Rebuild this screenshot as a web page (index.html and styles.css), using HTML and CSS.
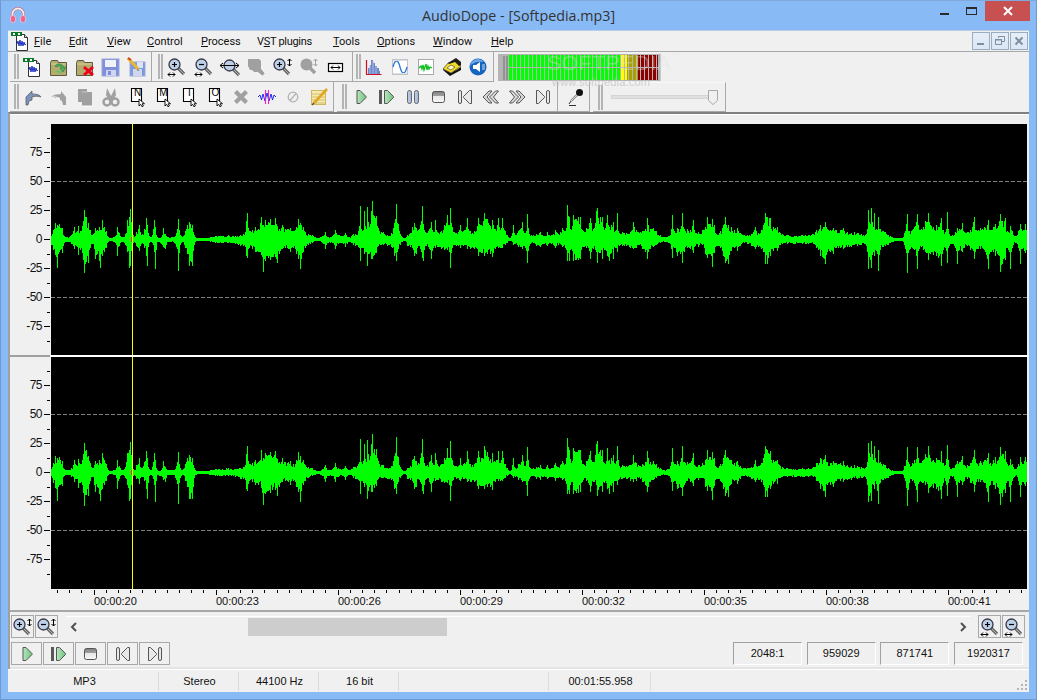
FILE: index.html
```html
<!DOCTYPE html>
<html lang="en">
<head>
<meta charset="utf-8">
<title>AudioDope - [Softpedia.mp3]</title>
<link rel="stylesheet" href="styles.css">
</head>
<body>
<svg class="defs" width="0" height="0" aria-hidden="true">
  <defs>
    <symbol id="i-new" viewBox="0 0 20 20">
      <path d="M5.5 3.500h8l3 3v13h-11z" fill="#fff" stroke="#333"/>
      <path d="M13.500 3.500v3h3" fill="#ddd" stroke="#333"/>
      <rect x="0" y="1" width="11" height="4" fill="#0a7a2a"/>
      <rect x="2" y="2" width="2" height="2" fill="#fff"/><rect x="7" y="2" width="2" height="2" fill="#fff"/>
      <path d="M6 13l1-3 1 5 1-6 1 6 1-5 1 5 1-4 1 3 1-1" fill="none" stroke="#2030c0" stroke-width="1"/>
    </symbol>
    <symbol id="i-open" viewBox="0 0 20 20">
      <path d="M1.500 5.500l1-2h6l1 2h8v13h-16z" fill="#b4ac6c" stroke="#5c5a40"/>
      <path d="M2 7h15" stroke="#d8d098"/>
      <path d="M6 9a5 5 0 0 1 9 2l2-1-3 5-3-4 2 0a3 3 0 0 0-5-1z" fill="#4fb060" stroke="#2c7a3c" stroke-width=".6"/>
      <path d="M13 15a4 4 0 0 1-6-1l2-1a3 3 0 0 0 4 1z" fill="#5fc070"/>
    </symbol>
    <symbol id="i-close" viewBox="0 0 20 20">
      <path d="M1.500 5.500l1-2h6l1 2h8v13h-16z" fill="#b4ac6c" stroke="#5c5a40"/>
      <path d="M2 7h15" stroke="#d8d098"/>
      <path d="M9 10l9 8M18 10l-9 8" stroke="#f0001c" stroke-width="3"/>
    </symbol>
    <symbol id="i-save" viewBox="0 0 20 20">
      <rect x="1" y="2" width="17" height="17" fill="#7f8fdc" stroke="#9aa6d8"/>
      <rect x="4" y="3" width="11" height="7" fill="#f0f2fa"/>
      <rect x="5" y="13" width="10" height="6" fill="#d0d6ee"/>
      <rect x="7" y="14" width="3" height="4" fill="#7f8fdc"/>
    </symbol>
    <symbol id="i-saveas" viewBox="0 0 20 20">
      <rect x="3" y="5" width="15" height="14" fill="#7f98dc" stroke="#9aa6d8"/>
      <rect x="6" y="12" width="9" height="7" fill="#d0d6ee"/>
      <rect x="10" y="5" width="6" height="6" fill="#dde4f6"/>
      <path d="M1 1l10 11" stroke="#e8b830" stroke-width="3"/>
      <path d="M1 1l3 2" stroke="#d04030" stroke-width="2"/>
      <path d="M11 12l1 2-2-1z" fill="#333"/>
    </symbol>
    <symbol id="i-lens" viewBox="0 0 20 20">
      <path d="M11 11l6 6" stroke="#666" stroke-width="3.200"/>
      <path d="M11 11l6 6" stroke="#b4b4b4" stroke-width="1"/>
      <circle cx="7.500" cy="7.500" r="5.500" fill="#bcd0e8" stroke="#383848" stroke-width="1.300"/>
    </symbol>
    <symbol id="i-zin-h" viewBox="0 0 20 20">
      <use href="#i-lens"/><path d="M5 7.500h5M7.500 5v5" stroke="#000" stroke-width="1.200"/>
      <path d="M1 17.500h7M1 17.500l2-2M1 17.500l2 2M8 17.500l-2-2M8 17.500l-2 2" stroke="#000" fill="none"/>
    </symbol>
    <symbol id="i-zout-h" viewBox="0 0 20 20">
      <use href="#i-lens"/><path d="M5 7.500h5" stroke="#000" stroke-width="1.200"/>
      <path d="M1 17.500h7M1 17.500l2-2M1 17.500l2 2M8 17.500l-2-2M8 17.500l-2 2" stroke="#000" fill="none"/>
    </symbol>
    <symbol id="i-zfit" viewBox="0 0 20 20">
      <g transform="translate(2 1)"><use href="#i-lens" width="20" height="20"/></g>
      <path d="M0 8.500h19M0 8.500l3-2.500M0 8.500l3 2.500M19 8.500l-3-2.500M19 8.500l-3 2.500" stroke="#000" fill="none"/>
    </symbol>
    <symbol id="i-dis1" viewBox="0 0 20 20">
      <path d="M2 2h11l2 2v7l4 5-3 3-5-4H8l-2-2H4L2 9z" fill="#a0a0a0"/>
      <path d="M15 11l4 5M11 15l5 4" stroke="#fff"/>
    </symbol>
    <symbol id="i-zin-v" viewBox="0 0 20 20">
      <g transform="translate(-1 0)"><use href="#i-lens" width="20" height="20"/></g>
      <path d="M4 7.500h5M6.500 5v5" stroke="#000" stroke-width="1.200"/>
      <path d="M16.500 2v7M16.500 2l-2 2M16.500 2l2 2M16.500 9l-2-2M16.500 9l2-2" stroke="#000" fill="none"/>
    </symbol>
    <symbol id="i-zout-v" viewBox="0 0 20 20">
      <g transform="translate(-1 0)"><use href="#i-lens" width="20" height="20"/></g>
      <path d="M4 7.500h5" stroke="#000" stroke-width="1.200"/>
      <path d="M16.500 2v7M16.500 2l-2 2M16.500 2l2 2M16.500 9l-2-2M16.500 9l2-2" stroke="#000" fill="none"/>
    </symbol>
    <symbol id="i-dis2" viewBox="0 0 20 20">
      <circle cx="7.500" cy="7.500" r="6" fill="#a0a0a0"/>
      <path d="M11 11l5 5" stroke="#a0a0a0" stroke-width="3.500"/>
      <path d="M16.500 2v7M16.500 2l-2 2M16.500 2l2 2M16.500 9l-2-2M16.500 9l2-2" stroke="#a0a0a0" fill="none"/>
    </symbol>
    <symbol id="i-fitw" viewBox="0 0 20 20">
      <rect x="2.500" y="6.500" width="14" height="8" fill="#fff" stroke="#000" stroke-width="1.200"/>
      <path d="M5 10.500h9M5 10.500l2-2M5 10.500l2 2M14 10.500l-2-2M14 10.500l-2 2" stroke="#000" fill="none"/>
    </symbol>
    <symbol id="i-spec" viewBox="0 0 20 20">
      <path d="M4 17v-6h2V8h1V3h2v3h2v3h2v2h2v3h1v3z" fill="#6c88c8"/>
      <path d="M6 17V8M9 17V4M12 17V9" stroke="#b0c0e8"/>
      <path d="M2.500 3v14.500h15" fill="none" stroke="#d01020" stroke-width="1.200"/>
    </symbol>
    <symbol id="i-sine" viewBox="0 0 20 20">
      <rect x="2.500" y="2.500" width="15" height="15" fill="#fff" stroke="#c4c4c4"/>
      <path d="M3 10c2-8 5-8 7 0s5 8 7 0" fill="none" stroke="#2878d8" stroke-width="1.300"/>
      <path d="M3 3.500h14M3 16.500h14" stroke="#d8e0f0"/>
    </symbol>
    <symbol id="i-gwave" viewBox="0 0 20 20">
      <rect x="2.500" y="2.500" width="15" height="15" fill="#fff" stroke="#a8a8a8"/>
      <path d="M3 11l2-2 1 3 1-4 1 5 2-6 1 6 1-4 1 3 1-2 2 1" fill="none" stroke="#10c020" stroke-width="1.300"/>
    </symbol>
    <symbol id="i-phone" viewBox="0 0 20 20">
      <path d="M1 13l7 6 11-6v-3L9 16 2 11z" fill="#111"/>
      <path d="M1 12l5-6 8-2 5 5-10 7z" fill="#f4dc20" stroke="#444" stroke-width=".7"/>
      <path d="M6 6l8-5 5 4v3l-2 1-4-4-6 2z" fill="#1a1a1a"/>
      <path d="M5 11l4-3 4 2-4 3z" fill="#fff8c0" stroke="#555" stroke-width=".7"/>
      <path d="M14 13l3-2" stroke="#a89000"/>
    </symbol>
    <symbol id="i-globe" viewBox="0 0 20 20">
      <circle cx="10" cy="10" r="8.500" fill="#1464c0"/>
      <path d="M10 2a8 8 0 0 0-8 7c3-4 9-5 14-4a8 8 0 0 0-6-3z" fill="#6aa8e4"/>
      <path d="M5 8h3l4-3v10l-4-3H5z" fill="#fff"/>
      <path d="M14 8h3M14 10h3M14 12h3" stroke="#cfe2f7"/>
    </symbol>
    <symbol id="i-undo" viewBox="0 0 20 20">
      <path d="M3 10l6-6v3c5 0 8 1 9 3-3-1-6-1-9 0v3l-3 1-1 4H3z" fill="#7c94bc" stroke="#555" stroke-width=".7"/>
    </symbol>
    <symbol id="i-redo" viewBox="0 0 20 20">
      <path d="M17 10l-5-6v3c-5 0-8 1-10 3 3-1 6 0 9 1v2l2 1 1 4h3z" fill="#a0a0a0"/>
      <path d="M3 11c2-1 5-1 7 0" stroke="#fff"/>
    </symbol>
    <symbol id="i-copy" viewBox="0 0 20 20">
      <path d="M3 2h9v3h5v14H7v-4H3z" fill="#a0a0a0"/>
      <path d="M7 5h5" stroke="#c4c4c4"/>
      <path d="M17 19H7" stroke="#fff"/>
    </symbol>
    <symbol id="i-cut" viewBox="0 0 20 20">
      <path d="M6 1l4 8 4-8 1 7-3 5-4 0-3-5z" fill="#a0a0a0"/>
      <circle cx="6" cy="15" r="3.500" fill="none" stroke="#a0a0a0" stroke-width="2.500"/>
      <circle cx="14" cy="15" r="3.500" fill="none" stroke="#a0a0a0" stroke-width="2.500"/>
    </symbol>
    <symbol id="i-mark" viewBox="0 0 20 20">
      <path d="M4.500 1.500h10v13h-10z" fill="#fff" stroke="#000" stroke-width="1.100"/>
      <path d="M12 12v7l1.700-1.700 1.200 2.400 1.500-.7-1.200-2.300h2.300z" fill="#fff" stroke="#000" stroke-width=".9"/>
    </symbol>
    <symbol id="i-x" viewBox="0 0 20 20">
      <path d="M3 6l3-3 4 4 4-4 3 3-4 4 4 4-3 3-4-4-4 4-3-3 4-4z" fill="#a0a0a0"/>
    </symbol>
    <symbol id="i-wave" viewBox="0 0 20 20">
      <path d="M1 10l2-2 1.500 5L6 7l2 7 2-8 2 8 2-7 1.500 6L17 8l2 2" fill="none" stroke="#0018e8" stroke-width=".9"/>
      <path d="M8.500 3v14M11.500 3v14" stroke="#f020c0" stroke-width="1.100"/>
    </symbol>
    <symbol id="i-forbid" viewBox="0 0 20 20">
      <circle cx="10" cy="10" r="4.800" fill="none" stroke="#b0b0b0" stroke-width="1.200"/>
      <path d="M7 13.500l6-7" stroke="#b0b0b0" stroke-width="1.200"/>
    </symbol>
    <symbol id="i-note" viewBox="0 0 20 20">
      <rect x="2.500" y="3.500" width="14" height="14" fill="#f6ecb0" stroke="#d0b860"/>
      <path d="M3 7h13M3 10h13M3 13h13M3 16h13" stroke="#d4bc70"/>
      <path d="M5 16L18 2" stroke="#e0a820" stroke-width="2.600"/>
      <path d="M5 16l-2 2" stroke="#555" stroke-width="1.500"/>
    </symbol>
    <linearGradient id="g-green" x1="0" x2="1" y1="0" y2="0"><stop offset="0" stop-color="#b8e4c0"/><stop offset="1" stop-color="#70c47c"/></linearGradient>
    <linearGradient id="g-blue" x1="0" x2="1" y1="0" y2="0"><stop offset="0" stop-color="#c0d0ec"/><stop offset="1" stop-color="#a0b4d8"/></linearGradient>
    <linearGradient id="g-stop" x1="0" x2="0" y1="0" y2="1"><stop offset="0" stop-color="#808080"/><stop offset=".4" stop-color="#a0a0a0"/><stop offset=".45" stop-color="#e8e8e8"/><stop offset="1" stop-color="#f8f8f8"/></linearGradient>
    <symbol id="i-play" viewBox="0 0 20 20">
      <path d="M6 3.500h3l6 6v1l-6 6H6z" fill="url(#g-green)" stroke="#555" stroke-linejoin="round"/>
    </symbol>
    <symbol id="i-playfrom" viewBox="0 0 20 20">
      <rect x="2" y="3" width="3" height="14" fill="#585858"/>
      <path d="M7.500 3.500h3l6 6v1l-6 6h-3z" fill="url(#g-green)" stroke="#555" stroke-linejoin="round"/>
    </symbol>
    <symbol id="i-pause" viewBox="0 0 20 20">
      <rect x="4.500" y="3.500" width="4" height="13" rx="2" fill="url(#g-blue)" stroke="#666"/>
      <rect x="11.500" y="3.500" width="4" height="13" rx="2" fill="url(#g-blue)" stroke="#666"/>
    </symbol>
    <symbol id="i-stop" viewBox="0 0 20 20">
      <rect x="3.500" y="4.500" width="12" height="11" rx="2" fill="url(#g-stop)" stroke="#555"/>
    </symbol>
    <symbol id="i-prev" viewBox="0 0 20 20">
      <rect x="3.500" y="3.500" width="3" height="13" rx="1.500" fill="#e8e8e8" stroke="#555"/>
      <path d="M16.500 3.500h-2l-6 6v1l6 6h2z" fill="#e8e8e8" stroke="#555" stroke-linejoin="round"/>
    </symbol>
    <symbol id="i-rew" viewBox="0 0 20 20">
      <path d="M11 4H8l-6 6 6 6h3l-5-6z" fill="#d8d8d8" stroke="#555" stroke-linejoin="round"/>
      <path d="M17.500 4h-3l-6 6 6 6h3l-5-6z" fill="#d8d8d8" stroke="#555" stroke-linejoin="round"/>
    </symbol>
    <symbol id="i-fwd" viewBox="0 0 20 20">
      <path d="M9 4h3l6 6-6 6H9l5-6z" fill="#d8d8d8" stroke="#555" stroke-linejoin="round"/>
      <path d="M2.500 4h3l6 6-6 6h-3l5-6z" fill="#d8d8d8" stroke="#555" stroke-linejoin="round"/>
    </symbol>
    <symbol id="i-next" viewBox="0 0 20 20">
      <path d="M3.500 3.500h2l6 6v1l-6 6h-2z" fill="#e8e8e8" stroke="#555" stroke-linejoin="round"/>
      <rect x="13.500" y="3.500" width="3" height="13" rx="1.500" fill="#e8e8e8" stroke="#555"/>
    </symbol>
    <symbol id="i-mic" viewBox="0 0 20 20">
      <path d="M11 8l-6 6" stroke="#8c8c8c" stroke-width="2.400"/>
      <path d="M11 8l-6 6" stroke="#e4e4e4" stroke-width=".8"/>
      <circle cx="13.500" cy="5.500" r="3.500" fill="#111"/>
      <path d="M3 18.500h7M3 17l2-3" stroke="#333"/>
    </symbol>
  </defs>
</svg>

<div class="window">
  <header class="titlebar">
    <div class="title-left">
      <svg class="appicon" viewBox="0 0 16 16" width="16" height="16">
        <path d="M2.500 10V7a5.500 5.500 0 0 1 11 0v3" fill="none" stroke="#c85a6c" stroke-width="3"/>
        <path d="M2.500 10V7a5.500 5.500 0 0 1 11 0v3" fill="none" stroke="#eef0f2" stroke-width="1.800"/>
        <rect x=".5" y="8.500" width="5" height="7" rx="2.400" fill="#f2628a" stroke="#f7d8e0" stroke-width=".6"/>
        <rect x="10.500" y="8.500" width="5" height="7" rx="2.400" fill="#f2628a" stroke="#f7d8e0" stroke-width=".6"/>
      </svg>
    </div>
    <div class="title-text">AudioDope - [Softpedia.mp3]</div>
    <div class="win-controls">
      <div class="win-btn"><span class="glyph-min"></span></div>
      <div class="win-btn"><span class="glyph-max"></span></div>
      <div class="win-btn win-close">
        <svg viewBox="0 0 10 10" width="10" height="10"><path d="M1 1l8 8M9 1l-8 8" stroke="#fff" stroke-width="2"/></svg>
      </div>
    </div>
  </header>

  <div class="client">
    <nav class="menubar">
      <svg class="menu-icon"><use href="#i-new"/></svg>
      <div class="menu-items">
        <span class="mi mi-file"><u>F</u>ile</span>
        <span class="mi mi-edit"><u>E</u>dit</span>
        <span class="mi mi-view"><u>V</u>iew</span>
        <span class="mi mi-control"><u>C</u>ontrol</span>
        <span class="mi mi-process"><u>P</u>rocess</span>
        <span class="mi mi-vst">V<u>S</u>T plugins</span>
        <span class="mi mi-tools"><u>T</u>ools</span>
        <span class="mi mi-options"><u>O</u>ptions</span>
        <span class="mi mi-window"><u>W</u>indow</span>
        <span class="mi mi-help"><u>H</u>elp</span>
      </div>
      <div class="mdi-btns">
        <div class="mdi-btn"><svg viewBox="0 0 12 12" width="12" height="12"><rect x="2" y="8" width="7" height="2" fill="#7d8fa3"/></svg></div>
        <div class="mdi-btn"><svg viewBox="0 0 12 12" width="12" height="12"><path d="M4.500 3V1.500h6v5H8M1.500 4.500h6v5h-6z" fill="none" stroke="#7d8fa3"/><path d="M1 4h7v1.500H1z" fill="#7d8fa3"/></svg></div>
        <div class="mdi-btn"><svg viewBox="0 0 12 12" width="12" height="12"><path d="M2.500 2.500l7 7M9.500 2.500l-7 7" stroke="#7d8fa3" stroke-width="2"/></svg></div>
      </div>
    </nav>

    <div class="toolrow">
      <div class="tgroup tg-file">
        <span class="grip"></span>
        <span class="tb"><svg><use href="#i-new"/></svg></span>
        <span class="tb"><svg><use href="#i-open"/></svg></span>
        <span class="tb"><svg><use href="#i-close"/></svg></span>
        <span class="tb"><svg><use href="#i-save"/></svg></span>
        <span class="tb"><svg><use href="#i-saveas"/></svg></span>
      </div>
      <div class="tgroup tg-zoom">
        <span class="grip"></span>
        <span class="tb"><svg><use href="#i-zin-h"/></svg></span>
        <span class="tb"><svg><use href="#i-zout-h"/></svg></span>
        <span class="tb"><svg><use href="#i-zfit"/></svg></span>
        <span class="tb"><svg><use href="#i-dis1"/></svg></span>
        <span class="tb"><svg><use href="#i-zin-v"/></svg></span>
        <span class="tb"><svg><use href="#i-dis2"/></svg></span>
        <span class="tb"><svg><use href="#i-fitw"/></svg></span>
      </div>
      <div class="tgroup tg-view">
        <span class="grip"></span>
        <span class="tb"><svg><use href="#i-spec"/></svg></span>
        <span class="tb"><svg><use href="#i-sine"/></svg></span>
        <span class="tb"><svg><use href="#i-gwave"/></svg></span>
        <span class="tb"><svg><use href="#i-phone"/></svg></span>
        <span class="tb"><svg><use href="#i-globe"/></svg></span>
      </div>
      <div class="tgroup tg-meter">
        <span class="grip"></span>
        <div class="meter">
          <div class="meter-row"></div>
          <div class="meter-row"></div>
        </div>
        <div class="watermark">SOFTPEDIA<sup>™</sup></div>
      </div>
    </div>

    <div class="toolrow toolrow-2">
      <div class="tgroup tg-edit">
        <span class="grip"></span>
        <span class="tb"><svg><use href="#i-undo"/></svg></span>
        <span class="tb"><svg><use href="#i-redo"/></svg></span>
        <span class="tb"><svg><use href="#i-copy"/></svg></span>
        <span class="tb"><svg><use href="#i-cut"/></svg></span>
        <span class="tb tb-mark"><svg><use href="#i-mark"/></svg><b>N</b></span>
        <span class="tb tb-mark"><svg><use href="#i-mark"/></svg><b>M</b></span>
        <span class="tb tb-mark"><svg><use href="#i-mark"/></svg><b>I</b></span>
        <span class="tb tb-mark"><svg><use href="#i-mark"/></svg><b>O</b></span>
        <span class="tb"><svg><use href="#i-x"/></svg></span>
        <span class="tb"><svg><use href="#i-wave"/></svg></span>
        <span class="tb"><svg><use href="#i-forbid"/></svg></span>
        <span class="tb"><svg><use href="#i-note"/></svg></span>
      </div>
      <div class="tgroup tg-transport">
        <span class="grip"></span>
        <span class="tb"><svg><use href="#i-play"/></svg></span>
        <span class="tb"><svg><use href="#i-playfrom"/></svg></span>
        <span class="tb"><svg><use href="#i-pause"/></svg></span>
        <span class="tb"><svg><use href="#i-stop"/></svg></span>
        <span class="tb"><svg><use href="#i-prev"/></svg></span>
        <span class="tb"><svg><use href="#i-rew"/></svg></span>
        <span class="tb"><svg><use href="#i-fwd"/></svg></span>
        <span class="tb"><svg><use href="#i-next"/></svg></span>
        <span class="tsep"></span>
        <span class="tb tb-mic"><svg><use href="#i-mic"/></svg></span>
      </div>
      <div class="tgroup tg-slider">
        <span class="grip"></span>
        <div class="slider">
          <div class="slider-track"></div>
          <svg class="slider-thumb" viewBox="0 0 10 15" width="10" height="15"><path d="M.5.500h9v10l-4.500 4-4.500-4z" fill="#f0f0f0" stroke="#a8a8a8"/></svg>
        </div>
        <div class="watermark-url">www.softpedia.com</div>
      </div>
    </div>

    <div class="doc">
      <div class="doc-top"></div>
      <section class="channel">
        <div class="yaxis">
          <div class="ytick">75</div><div class="ytick">50</div><div class="ytick">25</div><div class="ytick">0</div><div class="ytick">-25</div><div class="ytick">-50</div><div class="ytick">-75</div><div class="ytick"></div>
        </div>
        <canvas class="wave" id="ch1" width="976" height="231" data-center="115" data-seed="7"></canvas>
      </section>
      <div class="chan-divider"></div>
      <section class="channel">
        <div class="yaxis">
          <div class="ytick">75</div><div class="ytick">50</div><div class="ytick">25</div><div class="ytick">0</div><div class="ytick">-25</div><div class="ytick">-50</div><div class="ytick">-75</div><div class="ytick"></div>
        </div>
        <canvas class="wave" id="ch2" width="976" height="232" data-center="115" data-seed="23"></canvas>
      </section>
      <div class="timeruler">
        <span class="tlabel">00:00:20</span><span class="tlabel">00:00:23</span><span class="tlabel">00:00:26</span><span class="tlabel">00:00:29</span><span class="tlabel">00:00:32</span><span class="tlabel">00:00:35</span><span class="tlabel">00:00:38</span><span class="tlabel">00:00:41</span>
      </div>

      <div class="navrow">
        <div class="sq-group">
          <span class="sq"><svg><use href="#i-zin-v"/></svg></span>
          <span class="sq"><svg><use href="#i-zout-v"/></svg></span>
        </div>
        <div class="hscroll">
          <svg class="arrow" viewBox="0 0 8 10" width="8" height="10"><path d="M6 1L2 5l4 4" fill="none" stroke="#505050" stroke-width="2"/></svg>
          <div class="thumb"></div>
          <svg class="arrow" viewBox="0 0 8 10" width="8" height="10"><path d="M2 1l4 4-4 4" fill="none" stroke="#505050" stroke-width="2"/></svg>
        </div>
        <div class="sq-group">
          <span class="sq"><svg><use href="#i-zin-h"/></svg></span>
          <span class="sq"><svg><use href="#i-zout-h"/></svg></span>
        </div>
      </div>

      <div class="playrow">
        <div class="play-btns">
          <span class="pb"><svg><use href="#i-play"/></svg></span>
          <span class="pb"><svg><use href="#i-playfrom"/></svg></span>
          <span class="pb"><svg><use href="#i-stop"/></svg></span>
          <span class="pb"><svg><use href="#i-prev"/></svg></span>
          <span class="pb"><svg><use href="#i-next"/></svg></span>
        </div>
        <div class="counters">
          <span class="counter">2048:1</span>
          <span class="counter">959029</span>
          <span class="counter">871741</span>
          <span class="counter">1920317</span>
        </div>
      </div>
    </div>

    <footer class="statusbar">
      <span class="sc sc-150">MP3</span>
      <span class="sc sc-80">Stereo</span>
      <span class="sc sc-80">44100 Hz</span>
      <span class="sc sc-80">16 bit</span>
      <span class="sc sc-150"></span>
      <span class="sc sc-102">00:01:55.958</span>
      <span class="sc sc-rest"></span>
      <svg class="sizegrip" viewBox="0 0 12 12" width="12" height="12"><path d="M9 1h2v2H9zM5 5h2v2H5zM9 5h2v2H9zM1 9h2v2H1zM5 9h2v2H5zM9 9h2v2H9z" fill="#b4b4b4"/></svg>
    </footer>
  </div>
</div>
<script src="waveform.js"></script>
</body>
</html>
```
FILE: styles.css
```css
* { box-sizing: border-box; }
html, body { margin: 0; padding: 0; }
body {
  width: 1037px;
  height: 700px;
  overflow: hidden;
  background: #88baf6;
  font-family: "Liberation Sans", Arial, sans-serif;
  font-size: 11px;
  color: #000;
}
.defs { display: block; width: 0; height: 0; overflow: hidden; }

.window {
  height: 700px;
  display: flex;
  flex-direction: column;
  border: 1px solid #6f9ad0;
  border-top-color: #7fa8dc;
}

/* title bar */
.titlebar {
  height: 29px;
  display: grid;
  grid-template-columns: 1fr auto 1fr;
  flex: none;
}
.title-left { padding: 6px 0 0 9px; }
.appicon { display: block; }
.title-text {
  font-family: "Open Sans", sans-serif;
  font-size: 14.3px;
  line-height: 30px;
  color: #333;
}
.win-controls { display: flex; justify-content: flex-end; padding-right: 6px; }
.win-btn {
  width: 27px;
  height: 20px;
  display: flex;
  align-items: center;
  justify-content: center;
}
.glyph-min { display: block; width: 9px; height: 2px; margin-top: 6px; background: #2a2a2a; }
.glyph-max { display: block; width: 11px; height: 8px; border: 1px solid #2a2a2a; border-top-width: 2px; }
.win-close { width: 45px; background: #c75050; }

/* client */
.client {
  margin: 0 7px 7px;
  height: 662px;
  background: #f0f0f0;
  border-top: 1px solid #b8cde6;
  display: flex;
  flex-direction: column;
  flex: none;
}

/* menu */
.menubar {
  height: 21px;
  flex: none;
  display: flex;
  align-items: center;
  padding: 0 1px 0 3px;
  border-bottom: 1px solid #a8a8a8;
}
.menu-icon { width: 20px; height: 20px; flex: none; }
.menu-items { display: flex; flex: 1; padding-left: 3px; font-family: Roboto, "Liberation Sans", sans-serif; font-size: 11px; color: #111; }
.mi-file { width: 35px; }
.mi-edit { width: 38px; }
.mi-view { width: 40px; }
.mi-control { width: 54px; }
.mi-process { width: 56px; }
.mi-vst { width: 76px; letter-spacing: -.3px; }
.mi-tools { width: 44px; }
.mi-options { width: 56px; }
.mi-window { width: 58px; }
.mdi-btns { display: flex; gap: 1px; }
.mdi-btn {
  width: 18px;
  height: 18px;
  border: 1px solid #9aacbf;
  background: linear-gradient(#e6eef8, #dbe7f5);
  display: flex;
  align-items: center;
  justify-content: center;
}

/* toolbars */
.toolrow { height: 30px; flex: none; display: flex; padding-left: 2px; }
.tgroup {
  position: relative;
  display: flex;
  align-items: center;
  border-bottom: 1px solid #a8a8a8;
  border-right: 1px solid #a8a8a8;
}
.grip {
  width: 5px;
  height: 25px;
  flex: none;
  border-left: 2px solid #b4b4b4;
  border-right: 2px solid #b4b4b4;
}
.tb { width: 26px; height: 26px; flex: none; display: flex; align-items: center; justify-content: center; position: relative; }
.tb svg, .sq svg, .pb svg { width: 20px; height: 20px; display: block; }
.tg-file { width: 142px; padding-left: 4px; }
.tg-file .grip { margin-right: 1px; }
.tg-zoom { width: 201px; padding-left: 6px; }
.tg-zoom .grip { margin-right: 1px; }
.tg-zoom .tb { width: 26.4px; }
.tg-view { width: 141px; padding-left: 3px; }
.tg-meter {
  width: 163px;
  margin: 2px 0 0 4px;
  padding-left: 5px;
  background: #b4b4b4;
  border: 0;
  height: 27px;
  border-right: 1px solid #c8c8c8;
  gap: 1px;
}
.tg-meter .grip { height: 24px; border-color: #929292; margin-top: 1px; }
.meter { display: flex; flex-direction: column; gap: 1px; }
.meter-row {
  width: 149px;
  height: 12px;
  background:
    repeating-linear-gradient(90deg, transparent 0 3px, #b4b4b4 3px 4px),
    linear-gradient(90deg, #00ff00 0 111px, #ffff00 111px 118px, #a8a000 118px 129px, #8c0000 129px);
}
.watermark {
  position: absolute;
  left: 49px;
  top: -3px;
  font-size: 21px;
  letter-spacing: .6px;
  white-space: nowrap;
  color: rgba(225, 225, 225, .34);
  pointer-events: none;
}
.watermark sup { font-size: 8px; vertical-align: top; }

.tg-edit { width: 324px; padding-left: 4px; }
.tg-edit .grip { margin-right: 1px; }
.tg-transport { width: 253px; margin-left: 3px; padding-left: 5px; }
.tg-transport .grip { margin-right: 1px; }
.tsep { width: 1px; height: 29px; flex: none; background: #a8a8a8; margin: 0 2px 0 1px; }
.tb-mic { width: 28px; padding-left: 4px; }
.tg-slider { width: 133px; margin-left: 3px; padding-left: 5px; border-top: 1px solid #f8f8f8; }
.slider { display: flex; align-items: center; margin-left: 8px; }
.slider-track { width: 98px; height: 4px; background: #e0e0e0; border: 1px solid #d4d4d4; }
.slider-thumb { display: block; margin-left: -1px; }
.tb-mark b {
  position: absolute;
  left: 8px;
  top: 4px;
  width: 11px;
  text-align: center;
  font: normal 10px/10px "Liberation Sans", sans-serif;
}
.watermark-url {
  position: absolute;
  left: -41px;
  top: -7px;
  font-size: 11px;
  letter-spacing: .2px;
  color: rgba(190, 190, 190, .7);
  white-space: nowrap;
  pointer-events: none;
}

/* document */
.doc {
  flex: none;
  border-top: 2px solid #808080;
  border-left: 2px solid #a0a0a0;
  display: flex;
  flex-direction: column;
}
.doc-top { height: 10px; flex: none; border-top: 1px solid #fff; }
.channel { display: flex; flex: none; }
.yaxis { width: 41px; flex: none; padding-top: 14px; font-size: 12px; letter-spacing: -.5px; color: #111; }
.ytick {
  height: 29px;
  line-height: 29px;
  padding-right: 9px;
  text-align: right;
  background:
    linear-gradient(#000, #000) right 1px top 0 / 3px 1px no-repeat,
    linear-gradient(#000, #000) right 1px top 14px / 6px 1px no-repeat;
}
.ytick:empty { height: 1px; background-position: right 1px top 0, right 1px top 40px; }
.wave { display: block; flex: none; width: 976px; }
.chan-divider {
  height: 2px;
  flex: none;
  background: linear-gradient(90deg, #a0a0a0 0 40px, #fff 40px);
}
.timeruler {
  height: 23px;
  flex: none;
  display: flex;
  padding-left: 84px;
  border-bottom: 2px solid #a8a8a8;
  background:
    repeating-linear-gradient(90deg, #000 0 1px, transparent 1px 12.2px) 47px 1px / 970px 3px no-repeat;
}
.tlabel {
  width: 122px;
  flex: none;
  padding-top: 6px;
  line-height: 13px;
  color: #111;
  background: linear-gradient(#000, #000) 0 1px / 1px 5px no-repeat;
}

.navrow { height: 30px; flex: none; display: flex; padding: 3px 4px 0 1px; }
.sq-group { display: flex; gap: 1px; flex: none; height: 23px; }
.sq {
  width: 23px;
  height: 23px;
  border: 1px solid #a8a8a8;
  display: flex;
  align-items: center;
  justify-content: center;
}
.hscroll {
  flex: 1;
  margin: 1px 7px 0 8px;
  border-top: 1px solid #fff;
  height: 20px;
  display: flex;
  align-items: center;
  padding: 0 4px;
}
.arrow { display: block; flex: none; }
.thumb { width: 199px; height: 18px; margin: 0 auto 0 170px; background: #cdcdcd; }

.playrow { height: 27px; flex: none; display: flex; justify-content: space-between; padding: 0 6px 0 1px; border-bottom: 2px solid #e4e4e4; }
.play-btns { display: flex; gap: 1px; height: 23px; }
.pb {
  width: 31px;
  height: 23px;
  border: 1px solid #a8a8a8;
  display: flex;
  align-items: center;
  justify-content: center;
}
.counters { display: flex; gap: 4.67px; height: 23px; }
.counter {
  width: 69px;
  height: 23px;
  line-height: 21px;
  text-align: center;
  color: #111;
  border: 1px solid;
  border-color: #a0a0a0 #fff #fff #a0a0a0;
}
.statusbar {
  flex: 1;
  min-height: 0;
  display: flex;
  align-items: center;
  padding-left: 1px;
  border-top: 1px solid #fff;
}
.sc { height: 19px; line-height: 19px; padding-left: 2px; text-align: center; color: #111; border-right: 1px solid #dcdcdc; flex: none; }
.sc-150 { width: 150px; }
.sc-80 { width: 80px; }
.sc-102 { width: 102px; }
.sc-rest { flex: 1; border-right: 0; }
.sizegrip { flex: none; display: block; align-self: flex-end; margin: 0 1px 1px 0; }
```
FILE: waveform.js
```js
// Envelope of the recording, read as [screen x, peak above centre, peak below centre].
var ENVELOPE = [
  [51,5,5],[53,9,10],[55,16,15],[57,14,28],[59,15,12],[62,11,13],[64,3,3],[69,2,2],[71,4,4],
  [74,12,9],[76,7,6],[78,13,15],[80,8,10],[83,18,20],[84,29,33],[86,22,22],[88,16,23],[90,9,8],[92,4,4],
  [95,11,19],[97,9,14],[99,12,21],[100,9,28],[102,19,16],[104,12,12],[106,8,8],[108,2,2],[110,1,1],[113,2,2],[116,4,5],
  [117,12,16],[119,6,6],[122,2,2],[125,5,5],[127,19,12],[129,22,28],[130,30,26],[132,10,10],[134,2,2],
  [136,7,6],[139,14,11],[141,4,4],[144,10,8],[146,21,16],[147,14,26],[149,3,3],[151,2,2],
  [154,19,12],[155,12,29],[157,2,2],[160,1,3],[163,11,7],[165,5,9],[168,2,2],[173,2,2],
  [176,6,7],[178,20,31],[180,4,5],[182,2,2],[185,8,8],[187,14,14],[189,17,26],[192,14,26],[195,2,2],
  [200,1,1],[206,1,1],[210,2,2],[215,3,3],[222,3,3],[228,4,3],[235,3,4],[240,4,6],[243,5,6],
  [245,7,7],[246,18,16],[247,26,18],[249,8,8],[252,9,9],[255,12,12],[258,10,12],[261,22,15],[263,14,32],[265,19,21],
  [268,17,18],[270,20,20],[272,14,17],[275,21,17],[277,13,23],[279,10,14],[282,14,9],[285,10,8],[288,10,9],
  [290,11,12],[293,8,8],[296,12,14],[298,20,19],[300,16,29],[303,12,12],[305,7,8],[308,5,5],[312,4,3],[318,1,1],
  [322,3,3],[325,7,9],[328,2,3],[332,3,3],[335,9,9],[338,4,4],[342,3,3],[345,6,7],[349,2,2],[353,5,5],[355,5,6],
  [358,8,7],[360,33,21],[362,8,8],[364,28,14],[366,10,12],[367,32,26],[369,12,14],[371,28,19],[372,38,19],
  [374,23,15],[376,23,13],[378,11,6],[381,7,5],[383,7,5],[387,4,6],[391,6,7],
  [394,16,16],[396,35,21],[398,15,9],[400,5,5],[402,2,2],[405,1,1],[407,4,6],[410,6,7],[412,12,8],[414,16,16],[416,11,14],
  [418,9,6],[420,14,9],[422,33,18],[423,15,21],[426,6,6],[429,10,9],[431,17,19],[433,7,8],
  [435,19,8],[438,6,7],[441,8,9],[444,14,10],[447,24,10],[449,14,12],[450,31,28],[452,12,8],[456,6,6],[460,14,8],[463,8,6],
  [467,21,9],[470,8,9],[474,8,9],[478,21,16],[481,14,13],[484,26,16],[487,20,14],[490,13,14],[492,19,17],[495,10,9],[498,21,8],
  [500,9,8],[502,21,8],[505,8,5],[507,4,3],[510,1,1],[513,14,5],[515,4,4],[518,8,7],[522,17,9],[525,6,8],[527,25,23],[529,5,6],
  [533,4,3],[536,5,6],[540,7,7],[543,3,4],[547,7,6],[551,4,4],[555,9,8],[558,5,5],[562,11,7],[565,8,8],
  [567,34,21],[569,22,21],[571,9,9],[573,24,21],[576,20,20],[578,22,20],[580,22,19],[583,8,7],[586,11,8],[590,21,19],[593,10,9],
  [596,28,12],[597,31,23],[600,22,13],[602,22,19],[604,9,10],[607,24,16],[609,12,21],[611,14,13],[613,17,19],[615,8,8],[617,26,12],
  [619,6,6],[622,7,6],[626,6,6],[630,7,8],[633,17,9],[636,9,8],[638,7,5],[642,8,9],[645,10,12],[647,21,19],[650,10,9],[653,11,7],
  [656,8,5],[660,4,3],[664,2,2],[668,3,3],[671,10,9],[672,24,18],[674,8,8],[677,11,16],[680,10,14],[682,26,23],[684,10,12],[687,10,8],
  [690,9,9],[693,19,13],[695,6,6],[698,7,7],[702,9,5],[705,12,14],[707,22,18],[709,15,14],[712,20,27],[714,14,13],[717,4,6],[720,8,8],
  [723,14,16],[725,22,23],[728,14,24],[731,12,11],[734,9,8],[737,11,11],[740,6,6],[744,4,3],[747,4,4],[751,5,6],[755,12,9],[758,6,7],
  [761,9,9],[763,14,12],[765,26,24],[767,22,24],[770,21,16],[773,12,11],[775,11,8],[777,12,11],[780,6,5],[782,5,4],[787,4,4],
  [795,3,4],[802,4,4],[808,4,4],[813,5,4],[816,9,8],[820,14,16],[823,12,18],[825,17,24],[827,10,12],[830,9,12],[833,11,14],
  [836,9,8],[840,9,8],[843,11,9],[847,7,7],[851,6,7],[854,7,5],[857,6,6],[861,5,5],[865,4,4],[867,10,12],
  [868,29,29],[870,15,20],[871,31,28],[873,12,12],[874,26,16],[876,10,11],[878,22,31],[880,10,10],[883,8,7],[885,7,6],[888,4,5],[892,2,2],
  [897,1,1],[902,1,1],[904,6,5],[907,25,33],[909,8,10],[912,9,8],[914,12,10],[917,25,29],[919,9,9],[923,12,10],[925,18,12],
  [928,26,20],[930,14,14],[933,12,15],[936,14,16],[938,12,18],[941,21,26],[943,9,10],[945,7,8],[947,27,23],[949,5,6],[952,4,4],
  [955,7,8],[957,11,24],[959,10,10],[962,16,12],[964,7,8],[967,7,6],[970,9,10],[974,22,19],[976,9,9],[980,11,9],[984,12,10],
  [988,19,29],[990,9,12],[993,12,12],[995,15,16],[997,11,14],[1000,25,32],[1002,18,24],[1005,21,20],[1007,8,8],[1010,13,29],
  [1012,8,8],[1015,3,3],[1018,8,8],[1020,15,24],[1022,8,9],[1025,15,13],[1027,9,9]
];

// Between two readings the lower one dominates, so that peaks stay narrow.
function ease(a, b, t) {
  return a < b ? a + (b - a) * Math.pow(t, 1.6) : b + (a - b) * Math.pow(1 - t, 1.6);
}

// Returns [up, down, true when x is itself a reading].
function envelopeAt(x) {
  for (var i = 1; i < ENVELOPE.length; i++) {
    if (x <= ENVELOPE[i][0]) {
      var a = ENVELOPE[i - 1], b = ENVELOPE[i];
      var t = (x - a[0]) / (b[0] - a[0] || 1);
      return [ease(a[1], b[1], t), ease(a[2], b[2], t), x === b[0]];
    }
  }
  return [5, 5, false];
}

function drawChannel(canvas) {
  var ctx = canvas.getContext("2d");
  var w = canvas.width, h = canvas.height, center = +canvas.dataset.center;
  var seed = +canvas.dataset.seed;
  function rnd() {
    seed = (seed * 16807) % 2147483647;
    return seed / 2147483647;
  }
  ctx.fillStyle = "#000";
  ctx.fillRect(0, 0, w, h);

  ctx.fillStyle = "#808080";
  [center - 58, center + 58].forEach(function (y) {
    for (var x = 0; x < w; x += 6) ctx.fillRect(x, y, 4, 1);
  });

  ctx.fillStyle = "#00ff00";
  for (var col = 0; col < w; col++) {
    var e = envelopeAt(col + 51);
    var fu = e[2] ? 1 : 0.6 + 0.4 * rnd();
    var fd = e[2] ? 1 : 0.6 + 0.4 * rnd();
    var up = Math.max(1, Math.round(e[0] * fu));
    var down = Math.max(1, Math.round(e[1] * fd));
    ctx.fillRect(col, center - up, 1, up + down + 1);
  }

  ctx.fillStyle = "#ff2020";
  ctx.fillRect(80, center - 2, 1, 5);
  ctx.fillStyle = "#ffff00";
  ctx.fillRect(81, 0, 1, h);
}

drawChannel(document.getElementById("ch1"));
drawChannel(document.getElementById("ch2"));
```
